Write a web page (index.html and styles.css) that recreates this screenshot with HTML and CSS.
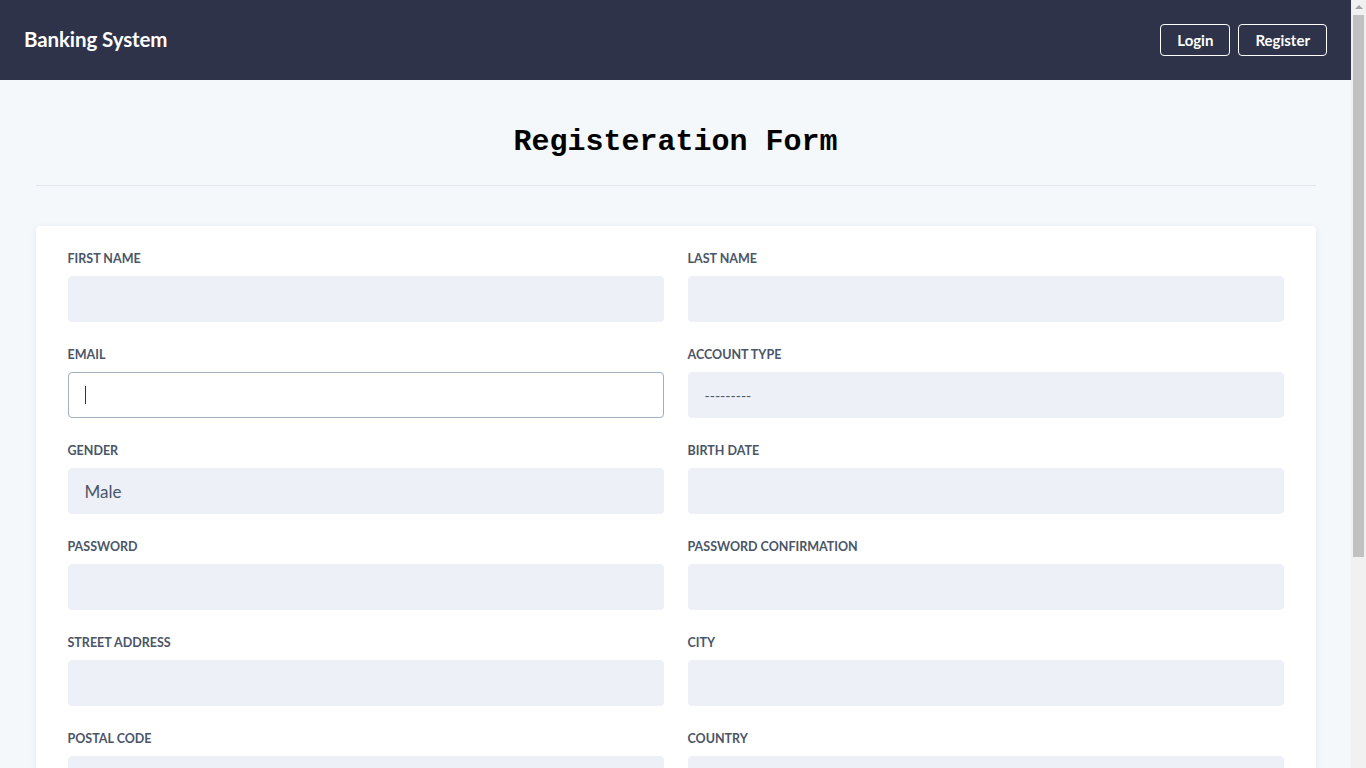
FILE: index.html
```html
<!DOCTYPE html>
<html lang="en">
<head>
<meta charset="utf-8">
<title>Banking System</title>
<link rel="stylesheet" href="styles.css">
</head>
<body>
<div class="page">
<header class="navbar">
  <a class="brand" href="#">Banking System</a>
  <nav class="nav-actions">
    <a class="nav-btn" href="#">Login</a>
    <a class="nav-btn" href="#">Register</a>
  </nav>
</header>
<main class="container">
  <h1 class="page-title">Registeration Form</h1>
  <hr class="divider">
  <form class="card">
    <div class="grid">
      <div class="field"><label>First Name</label><input class="input" type="text"></div>
      <div class="field"><label>Last Name</label><input class="input" type="text"></div>
      <div class="field"><label>Email</label><div class="input focused"><span class="caret"></span></div></div>
      <div class="field"><label>Account Type</label><div class="input select"><span class="placeholder-dash">---------</span></div></div>
      <div class="field"><label>Gender</label><div class="input select"><span>Male</span></div></div>
      <div class="field"><label>Birth Date</label><input class="input" type="text"></div>
      <div class="field"><label>Password</label><input class="input" type="password"></div>
      <div class="field"><label>Password Confirmation</label><input class="input" type="password"></div>
      <div class="field"><label>Street Address</label><input class="input" type="text"></div>
      <div class="field"><label>City</label><input class="input" type="text"></div>
      <div class="field"><label>Postal Code</label><input class="input" type="text"></div>
      <div class="field"><label>Country</label><input class="input" type="text"></div>
    </div>
    <div class="actions"><button type="button" class="submit">Register</button></div>
  </form>
</main>
</div>
<div class="scrollbar" aria-hidden="true">
  <div class="sb-arrow"></div>
  <div class="sb-thumb"></div>
</div>
</body>
</html>
```
FILE: styles.css
```css
* { box-sizing: border-box; }
html, body { margin: 0; padding: 0; }
body {
  background: #f5f8fb;
  font-family: "Lato", "Open Sans", sans-serif;
  color: #2d3748;
}
.page { margin-right: 15px; }
.navbar {
  height: 80px;
  background: #2e3349;
  display: flex;
  align-items: center;
  justify-content: space-between;
  padding: 0 24px;
}
.brand {
  color: #fff;
  font-weight: 700;
  font-size: 20.5px;
  line-height: 24px;
  margin-top: -2px;
  text-decoration: none;
  letter-spacing: -0.1px;
}
.nav-actions { display: flex; gap: 8px; }
.nav-btn {
  display: inline-flex;
  align-items: center;
  justify-content: center;
  height: 32px;
  padding: 0 16px 1px;
  border: 1px solid #fff;
  border-radius: 4px;
  color: #fff;
  font-weight: 700;
  font-size: 15px;
  text-decoration: none;
}
.container {
  max-width: 1280px;
  margin: 0 auto;
  padding-top: 44px;
}
.page-title {
  margin: 0;
  text-align: center;
  font-family: "Liberation Mono", monospace;
  font-weight: 700;
  font-size: 30px;
  line-height: 36px;
  color: #000;
}
.divider {
  margin: 25px 0 40px;
  border: 0;
  border-top: 1px solid #e2e6ee;
}
.card {
  background: #fff;
  border-radius: 4px;
  box-shadow: 0 1px 6px rgba(30, 40, 80, 0.08);
  padding: 24px 32px 32px;
}
.grid {
  display: grid;
  grid-template-columns: 1fr 1fr;
  column-gap: 24px;
  row-gap: 24px;
}
.field { display: flex; flex-direction: column; }
.field label {
  font-size: 12.5px;
  line-height: 18px;
  font-weight: 700;
  text-transform: uppercase;
  color: #4a5568;
  margin-bottom: 8px;
}
.input {
  height: 46px;
  width: 100%;
  background: #edf0f7;
  border: 1px solid #edf0f7;
  border-radius: 4px;
  padding: 0 16px;
  font-family: inherit;
  font-size: 17px;
  color: #4a5568;
  display: flex;
  align-items: center;
  outline: none;
}
.input.focused {
  background: #fff;
  border-color: #a0aec0;
}
.caret {
  display: inline-block;
  width: 1px;
  height: 18px;
  background: #2d3748;
}
.placeholder-dash { font-size: 14px; color: #4a5568; }
.actions { margin-top: 32px; }
.submit {
  background: #2e3349;
  color: #fff;
  border: 0;
  border-radius: 4px;
  padding: 12px 24px;
  font-family: inherit;
  font-weight: 700;
  font-size: 14px;
}
.scrollbar {
  position: fixed;
  top: 0;
  right: 0;
  bottom: 0;
  width: 15px;
  background: #f1f1f1;
  display: flex;
  flex-direction: column;
  align-items: center;
}
.sb-arrow {
  margin-top: 5px;
  width: 0;
  height: 0;
  border-left: 4px solid transparent;
  border-right: 4px solid transparent;
  border-bottom: 4px solid #a3a3a3;
}
.sb-thumb {
  margin-top: 6px;
  width: 11px;
  height: 542px;
  background: #c1c1c1;
}
```
